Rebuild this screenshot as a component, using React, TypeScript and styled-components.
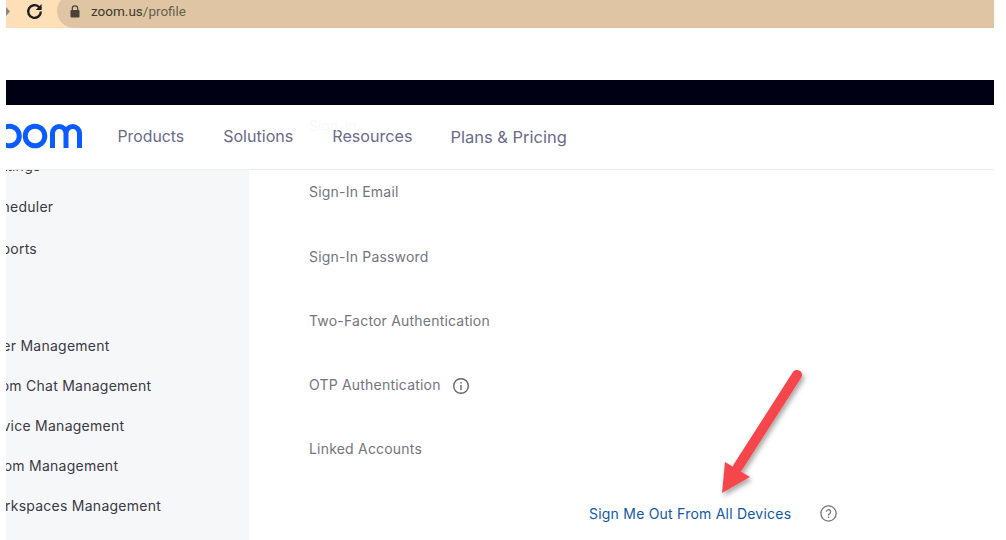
import React from "react";
import styled, { createGlobalStyle } from "styled-components";

const Global = createGlobalStyle`
  html, body { margin: 0; padding: 0; background: #fff; }
  body { font-family: Inter, "Liberation Sans", sans-serif; }
`;

const Page = styled.div`
  width: 988px;
  height: 540px;
  margin-left: 6px;
  overflow: hidden;
  display: flex;
  flex-direction: column;
  background: #fff;
`;

const Chrome = styled.div`
  height: 28px;
  flex: none;
  display: flex;
  overflow: hidden;
  background: #fedfb8;
`;

const ChromeButtons = styled.div`
  width: 51px;
  height: 22px;
  flex: none;
  display: flex;
  align-items: center;
  gap: 15px;
`;

const Address = styled.div`
  flex: 1;
  height: 34px;
  margin-top: -6px;
  display: flex;
  align-items: center;
  gap: 11px;
  padding-left: 13px;
  background: #dfc5a3;
  border-radius: 17px 0 0 17px;
  font-family: Roboto, "Open Sans", sans-serif;
  font-size: 13.5px;
  color: #40382c;
`;

const Path = styled.span`
  color: #66604f;
`;

const Gap = styled.div`
  height: 52px;
  flex: none;
`;

const DarkBar = styled.div`
  height: 25px;
  flex: none;
  background: #000015;
`;

const Nav = styled.nav`
  position: relative;
  z-index: 1;
  height: 62px;
  padding-bottom: 2px;
  flex: none;
  display: flex;
  align-items: center;
  background: #fff;
  border-bottom: 1px solid #ececec;
  color: #6a6a8a;
`;

const Logo = styled.svg`
  width: 79px;
  height: 64px;
  flex: none;
  margin-right: 32.5px;
`;

const NavItem = styled.span<{ $gap: number; $size: number; $drop?: number }>`
  margin-right: ${(p) => p.$gap}px;
  font-size: ${(p) => p.$size}px;
  padding-top: ${(p) => p.$drop ?? 0}px;
`;

const Ghost = styled.span`
  position: absolute;
  left: 303px;
  top: 12px;
  font-size: 14px;
  color: #f9f9fb;
`;

const Body = styled.div`
  flex: 1;
  min-height: 0;
  display: flex;
`;

const Sidebar = styled.aside`
  width: 243px;
  flex: none;
  background: #f6f7f9;
  overflow: hidden;
  color: #3a3a44;
  font-size: 14px;
  letter-spacing: 0.25px;
`;

const SideList = styled.div`
  margin-top: -14px;
  display: flex;
  flex-direction: column;
`;

const SideItem = styled.div<{ $h: number; $shift: number }>`
  height: ${(p) => p.$h}px;
  line-height: 20px;
  white-space: nowrap;
  margin-left: ${(p) => p.$shift}px;
`;

const Main = styled.main`
  flex: 1;
  position: relative;
  padding: 12.4px 0 0 60px;
  color: #74747e;
  font-size: 14px;
  letter-spacing: 0.2px;
`;

const Field = styled.div`
  height: 64.25px;
  line-height: 20px;
  display: flex;
  align-items: flex-start;
  gap: 11px;
`;

const InfoIcon = styled.svg`
  width: 18px;
  height: 18px;
  margin-top: 2px;
`;

const SignOut = styled.div`
  display: flex;
  align-items: center;
  gap: 29px;
  margin-left: 280px;
  line-height: 20px;
  letter-spacing: 0.22px;
  color: #0e5aa8;
`;

const Arrow = styled.svg`
  position: absolute;
  left: 457px;
  top: 193px;
  width: 110px;
  height: 140px;
  overflow: visible;
`;

export default function App() {
  return (
    <Page>
      <Global />
      <Chrome>
        <ChromeButtons>
          <svg width="4" height="9" viewBox="0 0 4 9"><path d="M0 0l4 4.500-4 4.500z" fill="#8f8676" /></svg>
          <svg width="19" height="19" viewBox="0 0 24 24" fill="none" stroke="#1d1d1d" strokeWidth="3">
            <path d="M20 12a8 8 0 1 1-2.400-5.700L20 8.500" />
            <path d="M21 2.500V10h-7.500z" fill="#1d1d1d" stroke="none" />
          </svg>
        </ChromeButtons>
        <Address>
          <svg width="10" height="13" viewBox="0 0 10 13"><path d="M2.300 5V3.600a2.700 2.700 0 0 1 5.400 0V5" fill="none" stroke="#4a4438" strokeWidth="1.200" /><rect x="0.500" y="5" width="9" height="7.500" rx="1" fill="#4a4438" /></svg>
          <span>zoom.us<Path>/profile</Path></span>
        </Address>
      </Chrome>
      <Gap />
      <DarkBar />
      <Nav>
        <Ghost>Sign-In</Ghost>
        <Logo viewBox="0 0 79 64" fill="none" stroke="#0b5cff" strokeWidth="5">
          <circle cx="3.500" cy="32" r="9.800" />
          <circle cx="29" cy="32" r="9.800" />
          <path d="M46.500 44V29.200a6.750 6.750 0 0 1 13.500 0V44M60 29.200a6.750 6.750 0 0 1 13.500 0V44" />
        </Logo>
        <NavItem $gap={39} $size={15.8}>Products</NavItem>
        <NavItem $gap={39} $size={16.1}>Solutions</NavItem>
        <NavItem $gap={38} $size={16.1}>Resources</NavItem>
        <NavItem $gap={0} $size={16.5} $drop={1}>Plans &amp; Pricing</NavItem>
      </Nav>
      <Body>
        <Sidebar>
          <SideList>
            <SideItem $h={41} $shift={-21}>Settings</SideItem>
            <SideItem $h={42} $shift={-22}>Scheduler</SideItem>
            <SideItem $h={97} $shift={-22}>Reports</SideItem>
            <SideItem $h={40} $shift={-22}>User Management</SideItem>
            <SideItem $h={40} $shift={-23}>Zoom Chat Management</SideItem>
            <SideItem $h={40} $shift={-22}>Device Management</SideItem>
            <SideItem $h={40} $shift={-20}>Room Management</SideItem>
            <SideItem $h={40} $shift={-23}>Workspaces Management</SideItem>
          </SideList>
        </Sidebar>
        <Main>
          <Field>Sign-In Email</Field>
          <Field>Sign-In Password</Field>
          <Field>Two-Factor Authentication</Field>
          <Field>
            OTP Authentication
            <InfoIcon viewBox="0 0 18 18" fill="none" stroke="#666" strokeWidth="1.400">
              <circle cx="9" cy="9" r="7.300" />
              <path d="M9 8v5" />
              <path d="M9 5v1.400" />
            </InfoIcon>
          </Field>
          <Field>Linked Accounts</Field>
          <SignOut>
            Sign Me Out From All Devices
            <svg width="17" height="17" viewBox="0 0 17 17" fill="none" stroke="#777" strokeWidth="1.300">
              <circle cx="8.500" cy="8.500" r="7.600" />
              <path d="M6.400 6.700a2.100 2.100 0 1 1 3.300 1.800c-.8.500-1.200 1-1.200 2" />
              <path d="M8.500 11.500v1.400" />
            </svg>
          </SignOut>
          <Arrow viewBox="0 0 110 140">
            <defs>
              <filter id="arrowShadow" x="-30%" y="-30%" width="160%" height="160%">
                <feDropShadow dx="2" dy="3" stdDeviation="2.500" floodColor="#000" floodOpacity="0.35" />
              </filter>
            </defs>
            <g filter="url(#arrowShadow)" fill="#f5474b">
              <path d="M91 12L32 104" stroke="#f5474b" strokeWidth="10" strokeLinecap="round" fill="none" />
              <path d="M16 130L19 99 44 114z" />
            </g>
          </Arrow>
        </Main>
      </Body>
    </Page>
  );
}
